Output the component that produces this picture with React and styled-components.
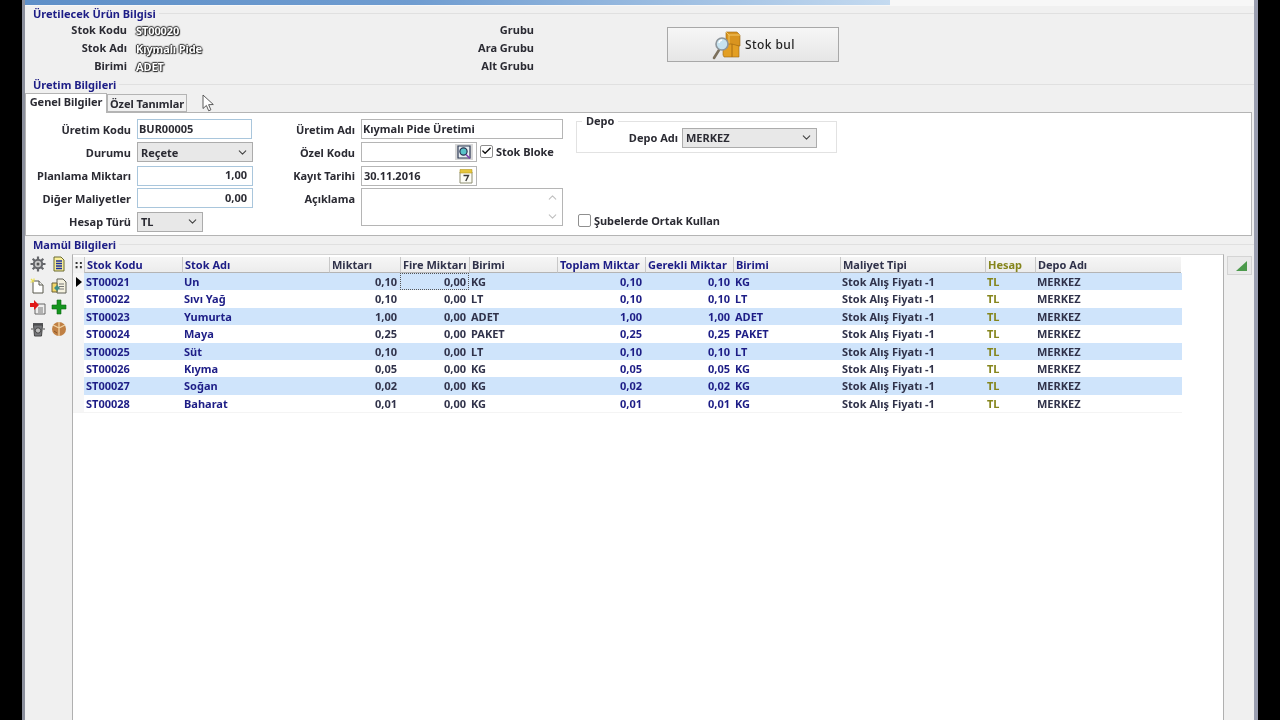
import styled, { createGlobalStyle } from "styled-components";
import { ChevronDown, ChevronUp, Check } from "lucide-react";

const GlobalStyle = createGlobalStyle`
    html, body {
        margin: 0;
        height: 100%;
        background: #000;
        overflow: hidden;
    }
    * {
        box-sizing: border-box;
    }
`;

const NAVY = "#1d1d86";
const DARK = "#30324a";
const OLIVE = "#85851c";

const columns = [
    { key: "code", title: "Stok Kodu", width: 98, color: NAVY },
    { key: "name", title: "Stok Adı", width: 147, color: NAVY },
    { key: "qty", title: "Miktarı", width: 71, color: DARK, right: true },
    { key: "fire", title: "Fire Miktarı", width: 69, color: DARK, right: true },
    { key: "unit", title: "Birimi", width: 88, color: DARK },
    { key: "total", title: "Toplam Miktar", width: 88, color: NAVY, right: true },
    { key: "need", title: "Gerekli Miktar", width: 88, color: NAVY, right: true },
    { key: "unit2", title: "Birimi", width: 107, color: NAVY },
    { key: "cost", title: "Maliyet Tipi", width: 145, color: DARK },
    { key: "acc", title: "Hesap", width: 50, color: OLIVE },
    { key: "depot", title: "Depo Adı", width: 146, color: DARK },
];

const items = [
    ["ST00021", "Un", "0,10", "KG"],
    ["ST00022", "Sıvı Yağ", "0,10", "LT"],
    ["ST00023", "Yumurta", "1,00", "ADET"],
    ["ST00024", "Maya", "0,25", "PAKET"],
    ["ST00025", "Süt", "0,10", "LT"],
    ["ST00026", "Kıyma", "0,05", "KG"],
    ["ST00027", "Soğan", "0,02", "KG"],
    ["ST00028", "Baharat", "0,01", "KG"],
];

function GearIcon() {
    return (
        <svg width="16" height="16" viewBox="0 0 16 16">
            <circle cx="8" cy="8" r="5.2" fill="#66676b" />
            <path d="M8 .5v15M.5 8h15M2.7 2.7l10.6 10.6M13.3 2.7 2.7 13.3" stroke="#66676b" strokeWidth="2.2" />
            <circle cx="8" cy="8" r="3.2" fill="#c8c8c8" />
            <circle cx="8" cy="8" r="1.5" fill="#555" />
        </svg>
    );
}

function ListDocIcon() {
    return (
        <svg width="16" height="16" viewBox="0 0 16 16">
            <path d="M3 1h7l3 3v11H3z" fill="#f8ee9a" stroke="#6a6a30" />
            <path d="M5 5h6M5 7.500h6M5 10h6M5 12.500h6" stroke="#1c2f9c" strokeWidth="1.5" />
        </svg>
    );
}

function NewDocIcon() {
    return (
        <svg width="16" height="16" viewBox="0 0 16 16">
            <path d="M3 3h6l4 4v8H3z" fill="#fff" stroke="#59594c" />
            <path d="M9 3v4h4" fill="#eee" stroke="#59594c" />
            <path d="M1 1l3 3M4 .5v2M.5 4h2" stroke="#ece04a" strokeWidth="1.2" />
        </svg>
    );
}

function EditDocIcon() {
    return (
        <svg width="16" height="16" viewBox="0 0 16 16">
            <path d="M6 1h6l3 3v11H6z" fill="#f4f1df" stroke="#5f5f55" />
            <path d="M8 6h5M8 8.500h5M8 11h5" stroke="#777" />
            <path d="M1 5h5v9H1z" fill="#f3d66a" stroke="#6a6337" />
            <path d="M3 10l3-3 3 3-3 3z" fill="#3f8f88" />
        </svg>
    );
}

function CutDocIcon() {
    return (
        <svg width="16" height="16" viewBox="0 0 16 16">
            <path d="M5 5h10v10H5z" fill="#eee" stroke="#666" />
            <path d="M8 9h5M8 11h5M8 13h5" stroke="#777" />
            <path d="M0 4h4V1l5 5-5 5V8H0z" fill="#e01818" />
        </svg>
    );
}

function PlusIcon() {
    return (
        <svg width="16" height="16" viewBox="0 0 16 16">
            <path d="M6 1h4v5h5v4h-5v5H6v-5H1V6h5z" fill="#14951e" stroke="#0b6a13" strokeWidth=".6" />
        </svg>
    );
}

function TrashIcon() {
    return (
        <svg width="16" height="16" viewBox="0 0 16 16">
            <path d="M3 2h10v2H3z" fill="#55565a" />
            <path d="M3.500 4h9l-1 11h-7z" fill="#77787c" stroke="#444" />
            <circle cx="8" cy="9.500" r="2.700" fill="#bbb" stroke="#444" />
            <path d="M1 8h2M13 8h2" stroke="#888" strokeWidth="1.4" />
        </svg>
    );
}

function BoxIcon() {
    return (
        <svg width="16" height="16" viewBox="0 0 16 16">
            <circle cx="8" cy="8" r="7" fill="#c08044" />
            <path d="M8 1v6M8 7 2 4M8 7l6-3M8 7v8" stroke="#f1d3a4" strokeWidth="1.3" />
            <path d="M3 10l3 2" stroke="#8a5526" />
        </svg>
    );
}

function StockSearchIcon() {
    return (
        <svg width="30" height="30" viewBox="0 0 30 30">
            <path d="M14 2h11l3 3v11H14z" fill="#d9941f" stroke="#9c6410" strokeWidth=".6" />
            <path d="M14 2l3 3h11M17 5v11" stroke="#f4c866" fill="none" />
            <path d="M11 14h9l7 2v11H12l-1-2z" fill="#e39f24" stroke="#9c6410" strokeWidth=".6" />
            <path d="M20 14v13" stroke="#a86c12" />
            <path d="M7 20 2 28" stroke="#7c705c" strokeWidth="2.600" strokeLinecap="round" />
            <circle cx="10" cy="14" r="6" fill="#c7e3ef" stroke="#8d959b" strokeWidth="1.6" />
            <path d="M7 13a3.500 3.500 0 0 1 3-3" stroke="#fff" fill="none" strokeWidth="1.4" />
        </svg>
    );
}

function CodeSearchIcon() {
    return (
        <svg width="16" height="15" viewBox="0 0 16 15">
            <path d="M2 1h12v12H2z" fill="#e9eef2" stroke="#2d3a55" strokeWidth="1.2" />
            <circle cx="7.500" cy="6.500" r="3.600" fill="#59c3c9" stroke="#253350" strokeWidth="1.2" />
            <path d="M10 9.500l4 4" stroke="#7c3fb0" strokeWidth="1.6" />
        </svg>
    );
}

function CalendarIcon() {
    return (
        <svg width="14" height="16" viewBox="0 0 14 16">
            <path d="M1 4h12v11H1z" fill="#fdfdf6" stroke="#8d8d70" />
            <path d="M1 1.500h12v3.500H1z" fill="#e6c63c" stroke="#b59a25" strokeWidth=".6" />
            <path d="M4.500 7.500h5L6.800 13" fill="none" stroke="#3a3a3a" strokeWidth="1.4" />
        </svg>
    );
}

function ArrowCursor() {
    return (
        <svg width="14" height="18" viewBox="0 0 14 18">
            <path d="M1 1v13.500l3.400-3 2.300 5.300 2.200-1-2.300-5.100 4.700-.2z" fill="#fff" stroke="#4a4a4a" strokeWidth=".9" />
        </svg>
    );
}

function App() {
    return (
        <>
            <GlobalStyle />
            <Window>
                <TitleStrip>
                    <TitleFill />
                </TitleStrip>

                <SectionTitle>Üretilecek Ürün Bilgisi</SectionTitle>
                <InfoArea>
                    <InfoColumn>
                        <InfoRow>
                            <InfoLabel>Stok Kodu</InfoLabel>
                            <InfoValue>ST00020</InfoValue>
                        </InfoRow>
                        <InfoRow>
                            <InfoLabel>Stok Adı</InfoLabel>
                            <InfoValue>Kıymalı Pide</InfoValue>
                        </InfoRow>
                        <InfoRow>
                            <InfoLabel>Birimi</InfoLabel>
                            <InfoValue>ADET</InfoValue>
                        </InfoRow>
                    </InfoColumn>
                    <GroupColumn>
                        <InfoLabel>Grubu</InfoLabel>
                        <InfoLabel>Ara Grubu</InfoLabel>
                        <InfoLabel>Alt Grubu</InfoLabel>
                    </GroupColumn>
                    <FindButton>
                        <StockSearchIcon />
                        Stok bul
                    </FindButton>
                </InfoArea>

                <SectionTitle $top={1}>Üretim Bilgileri</SectionTitle>
                <Tabs>
                    <Tab $active>Genel Bilgiler</Tab>
                    <Tab>Özel Tanımlar</Tab>
                    <CursorMark>
                        <ArrowCursor />
                    </CursorMark>
                </Tabs>
                <TabPanel>
                    <FormColumn $width={227}>
                        <FormRow $label={105}>
                            <FieldLabel>Üretim Kodu</FieldLabel>
                            <TextField $width={115} $accent readOnly value="BUR00005" />
                        </FormRow>
                        <FormRow $label={105} $top={3}>
                            <FieldLabel>Durumu</FieldLabel>
                            <SelectBox $width={116}>
                                Reçete
                                <ChevronDown size={13} strokeWidth={2} />
                            </SelectBox>
                        </FormRow>
                        <FormRow $label={105} $top={4}>
                            <FieldLabel $top={-2}>Planlama Miktarı</FieldLabel>
                            <TextField $width={116} $accent $right $lift readOnly value="1,00" />
                        </FormRow>
                        <FormRow $label={105} $top={2}>
                            <FieldLabel>Diğer Maliyetler</FieldLabel>
                            <TextField $width={116} $accent $right readOnly value="0,00" />
                        </FormRow>
                        <FormRow $label={105} $top={4}>
                            <FieldLabel $top={-2}>Hesap Türü</FieldLabel>
                            <SelectBox $width={66} $lift>
                                TL
                                <ChevronDown size={13} strokeWidth={2} />
                            </SelectBox>
                        </FormRow>
                    </FormColumn>

                    <FormColumn $width={323}>
                        <FormRow $label={102}>
                            <FieldLabel>Üretim Adı</FieldLabel>
                            <TextField $width={202} readOnly value="Kıymalı Pide Üretimi" />
                        </FormRow>
                        <FormRow $label={102} $top={3}>
                            <FieldLabel>Özel Kodu</FieldLabel>
                            <FieldBox $width={116}>
                                <LookupButton>
                                    <CodeSearchIcon />
                                </LookupButton>
                            </FieldBox>
                            <CheckRow>
                                <CheckBox $checked>
                                    <Check size={12} strokeWidth={3} />
                                </CheckBox>
                                Stok Bloke
                            </CheckRow>
                        </FormRow>
                        <FormRow $label={102} $top={4}>
                            <FieldLabel $top={-2}>Kayıt Tarihi</FieldLabel>
                            <FieldBox $width={116} $text>
                                <DateText>30.11.2016</DateText>
                                <CalendarIcon />
                            </FieldBox>
                        </FormRow>
                        <FormRow $label={102} $top={2} $tall>
                            <FieldLabel $top={3}>Açıklama</FieldLabel>
                            <MemoBox>
                                <ChevronUp size={13} strokeWidth={2} />
                                <ChevronDown size={13} strokeWidth={2} />
                            </MemoBox>
                        </FormRow>
                    </FormColumn>

                    <DepotColumn>
                        <DepotGroup>
                            <DepotLegend>Depo</DepotLegend>
                            <FormRow $label={101}>
                                <FieldLabel $top={-2} $gap={4}>Depo Adı</FieldLabel>
                                <SelectBox $width={135} $lift>
                                    MERKEZ
                                    <ChevronDown size={13} strokeWidth={2} />
                                </SelectBox>
                            </FormRow>
                        </DepotGroup>
                        <CheckRow $plain>
                            <CheckBox />
                            Şubelerde Ortak Kullan
                        </CheckRow>
                    </DepotColumn>
                </TabPanel>

                <SectionTitle $top={1}>Mamül Bilgileri</SectionTitle>
                <GridArea>
                    <SideTools>
                        <GearIcon />
                        <ListDocIcon />
                        <NewDocIcon />
                        <EditDocIcon />
                        <CutDocIcon />
                        <PlusIcon />
                        <TrashIcon />
                        <BoxIcon />
                    </SideTools>
                    <GridPanel>
                        <HeaderRow>
                            <IndicatorHead>∷</IndicatorHead>
                            {columns.map((col) => (
                                <HeaderCell key={col.key} $width={col.width} $color={col.color}>
                                    {col.title}
                                </HeaderCell>
                            ))}
                        </HeaderRow>
                        {items.map((item, i) => {
                            const values = {
                                code: item[0],
                                name: item[1],
                                qty: item[2],
                                fire: "0,00",
                                unit: item[3],
                                total: item[2],
                                need: item[2],
                                unit2: item[3],
                                cost: "Stok Alış Fiyatı -1",
                                acc: "TL",
                                depot: "MERKEZ",
                            };
                            return (
                                <DataRow key={item[0]} $odd={i % 2 === 0}>
                                    <IndicatorCell>{i === 0 && <RowPointer />}</IndicatorCell>
                                    {columns.map((col) => (
                                        <DataCell
                                            key={col.key}
                                            $width={col.width}
                                            $color={col.color}
                                            $right={col.right}
                                            $focus={i === 0 && col.key === "fire"}
                                        >
                                            {values[col.key]}
                                        </DataCell>
                                    ))}
                                </DataRow>
                            );
                        })}
                    </GridPanel>
                    <RightRail>
                        <CornerButton>
                            <CornerMark />
                        </CornerButton>
                    </RightRail>
                </GridArea>
            </Window>
        </>
    );
}

export default App;

const Window = styled.div`
    display: flex;
    flex-direction: column;
    width: 1236px;
    height: 720px;
    margin-left: 22px;
    overflow: hidden;
    background-color: #f0f0f0;
    border-left: 3px solid #8b8f9c;
    border-right: 4px solid #9a9eb0;
    font-family: "Noto Sans", "DejaVu Sans", sans-serif;
    font-size: 11px;
    font-weight: 700;
    color: #2b2b33;
    filter: blur(0.35px);
`;

const TitleStrip = styled.div`
    flex: none;
    height: 6px;
    background-color: #f7f7f7;
`;

const TitleFill = styled.div`
    width: 865px;
    height: 5px;
    background: linear-gradient(90deg, #5f90c8 0%, #6f9cd0 45%, #c4daf0 100%);
`;

const SectionTitle = styled.div`
    flex: none;
    display: flex;
    align-items: center;
    gap: 3px;
    height: 14px;
    margin-top: ${(p) => p.$top || 0}px;
    padding-left: 8px;
    color: ${NAVY};

    &::after {
        content: "";
        flex: 1;
        height: 1px;
        background-color: #e0e0e0;
    }
`;

const InfoArea = styled.div`
    flex: none;
    display: flex;
    height: 56px;
    padding-top: 1px;
`;

const InfoColumn = styled.div`
    display: flex;
    flex-direction: column;
    width: 300px;
`;

const InfoRow = styled.div`
    display: grid;
    grid-template-columns: 102px auto;
    column-gap: 9px;
    align-items: center;
    height: 18px;
`;

const InfoLabel = styled.div`
    height: 18px;
    line-height: 18px;
    text-align: right;
`;

const InfoValue = styled.div`
    color: #fff;
    font-weight: 700;
    letter-spacing: -0.1px;
    text-shadow: 0 0 2px #222, 1px 1px 1px #222, -1px 0 1px #333, 0 -1px 1px #444;
`;

const GroupColumn = styled.div`
    display: flex;
    flex-direction: column;
    width: 209px;
`;

const FindButton = styled.div`
    display: flex;
    align-items: center;
    justify-content: center;
    gap: 3px;
    width: 172px;
    height: 35px;
    margin: 6px 0 0 133px;
    padding-left: 1px;
    border: 1px solid #a8a8a8;
    background: linear-gradient(#f6f6f6, #e6e6e6);
    font-size: 12px;
    font-weight: 500;
    letter-spacing: 0.4px;
    color: #222;
`;

const Tabs = styled.div`
    position: relative;
    flex: none;
    display: flex;
    align-items: flex-end;
    height: 19px;
    margin-top: 2px;
    z-index: 1;
`;

const Tab = styled.div`
    display: flex;
    align-items: center;
    justify-content: center;
    height: ${(p) => (p.$active ? "20px" : "18px")};
    width: ${(p) => (p.$active ? "82px" : "80px")};
    margin-bottom: ${(p) => (p.$active ? "-1px" : "0")};
    padding-bottom: ${(p) => (p.$active ? "4px" : "0")};
    border: 1px solid #b4b4b4;
    border-bottom: ${(p) => (p.$active ? "none" : "1px solid #b4b4b4")};
    background-color: ${(p) => (p.$active ? "#fff" : "#f0f0f0")};
    letter-spacing: -0.05px;
`;

const CursorMark = styled.div`
    position: absolute;
    left: 177px;
    top: 1px;
`;

const TabPanel = styled.div`
    flex: none;
    display: flex;
    width: 1227px;
    height: 124px;
    padding-top: 6px;
    background-color: #fff;
    border: 1px solid #b4b4b4;
`;

const FormColumn = styled.div`
    flex: none;
    display: flex;
    flex-direction: column;
    width: ${(p) => p.$width}px;
`;

const FormRow = styled.div`
    display: flex;
    align-items: ${(p) => (p.$tall ? "flex-start" : "center")};
    margin-top: ${(p) => p.$top || 0}px;
    min-height: 20px;
    --label: ${(p) => p.$label}px;
`;

const FieldLabel = styled.label`
    flex: none;
    width: var(--label);
    margin-right: ${(p) => p.$gap ?? 6}px;
    margin-top: ${(p) => p.$top || 0}px;
    text-align: right;
`;

const TextField = styled.input`
    width: ${(p) => p.$width}px;
    height: 20px;
    padding: 0 5px ${(p) => (p.$lift ? "4px" : "2px")} 1px;
    border: 1px solid ${(p) => (p.$accent ? "#a9c6dc" : "#b5b5b5")};
    outline: none;
    background-color: #fff;
    text-align: ${(p) => (p.$right ? "right" : "left")};
    font: inherit;
    color: #2b2b33;
`;

const FieldBox = styled.div`
    display: flex;
    align-items: center;
    justify-content: ${(p) => (p.$text ? "space-between" : "flex-end")};
    width: ${(p) => p.$width}px;
    height: 20px;
    padding: 0 3px 0 2px;
    border: 1px solid #b5b5b5;
    background-color: #fff;
`;

const DateText = styled.span`
    margin-top: -2px;
`;

const LookupButton = styled.div`
    display: flex;
    align-items: center;
    justify-content: center;
    width: 18px;
    height: 16px;
    background-color: #d8d8d8;
`;

const SelectBox = styled.div`
    display: flex;
    align-items: center;
    justify-content: space-between;
    width: ${(p) => p.$width}px;
    height: 20px;
    padding: 0 3px ${(p) => (p.$lift ? "2px" : "0")} 3px;
    border: 1px solid #acacac;
    background-color: #e8e8e8;

    svg {
        color: #444;
    }
`;

const MemoBox = styled.div`
    display: flex;
    flex-direction: column;
    align-items: flex-end;
    justify-content: space-between;
    width: 202px;
    height: 38px;
    padding: 2px 3px;
    border: 1px solid #b5b5b5;
    background-color: #fff;

    svg {
        color: #c0c0c0;
    }
`;

const CheckRow = styled.div`
    display: flex;
    align-items: center;
    gap: 3px;
    margin-left: ${(p) => (p.$plain ? "2px" : "3px")};
    margin-top: ${(p) => (p.$plain ? "60px" : "-2px")};
    letter-spacing: -0.05px;
`;

const CheckBox = styled.div`
    display: flex;
    align-items: center;
    justify-content: center;
    width: 13px;
    height: 13px;
    border: 1px solid #8f8f8f;
    border-radius: 2px;
    background-color: #fff;
    color: #111;
`;

const DepotColumn = styled.div`
    display: flex;
    flex-direction: column;
`;

const DepotGroup = styled.div`
    position: relative;
    width: 261px;
    height: 32px;
    margin-top: 2px;
    padding-top: 6px;
    border: 1px solid #e2e2e2;
`;

const DepotLegend = styled.div`
    position: absolute;
    left: 5px;
    top: -8px;
    padding: 0 4px;
    background-color: #fff;
    line-height: 14px;
`;

const GridArea = styled.div`
    flex: 1;
    display: flex;
    margin-top: 3px;
`;

const SideTools = styled.div`
    flex: none;
    display: grid;
    grid-template-columns: 16px 16px;
    grid-auto-rows: 16px;
    column-gap: 5px;
    row-gap: 5.5px;
    align-content: start;
    width: 47px;
    padding: 2px 0 0 5px;
`;

const GridPanel = styled.div`
    flex: none;
    width: 1152px;
    padding-top: 2px;
    background-color: #fff;
    border-left: 1px solid #b0b0b0;
    border-right: 1px solid #b0b0b0;
    border-top: 1px solid #d4d4d4;
`;

const HeaderRow = styled.div`
    display: flex;
    height: 16px;
`;

const IndicatorHead = styled.div`
    flex: none;
    width: 11px;
    line-height: 15px;
    text-align: center;
    background-color: #f2f2f2;
    color: #333;
`;

const HeaderCell = styled.div`
    flex: none;
    width: ${(p) => p.$width}px;
    padding-left: 2px;
    line-height: 15px;
    white-space: nowrap;
    overflow: hidden;
    background: linear-gradient(#f6f6f6, #ececec);
    border-left: 1px solid #c8c8c8;
    border-bottom: 1px solid #b4b4b4;
    color: ${(p) => p.$color};
`;

const DataRow = styled.div`
    display: flex;
    height: 17.4px;
    width: 1109px;
    background-color: ${(p) => (p.$odd ? "#cfe4fb" : "#fff")};
    box-shadow: 0 1px 0 #f4f4f4;
`;

const IndicatorCell = styled.div`
    flex: none;
    display: flex;
    align-items: center;
    justify-content: center;
    width: 11px;
    background-color: #f6f6f6;
`;

const RowPointer = styled.div`
    width: 0;
    height: 0;
    border-top: 5px solid transparent;
    border-bottom: 5px solid transparent;
    border-left: 6px solid #000;
`;

const DataCell = styled.div`
    flex: none;
    width: ${(p) => p.$width}px;
    padding: 0 3px 0 2px;
    line-height: 17px;
    white-space: nowrap;
    text-align: ${(p) => (p.$right ? "right" : "left")};
    color: ${(p) => p.$color};
    outline: ${(p) => (p.$focus ? "1px dotted #555" : "none")};
    outline-offset: -1px;
`;

const RightRail = styled.div`
    flex: 1;
    padding: 2px 0 0 3px;
`;

const CornerButton = styled.div`
    position: relative;
    width: 25px;
    height: 19px;
    border: 1px solid #d4d4d4;
    background-color: #eaeaea;
`;

const CornerMark = styled.div`
    position: absolute;
    right: 4px;
    bottom: 3px;
    width: 0;
    height: 0;
    border-left: 11px solid transparent;
    border-bottom: 10px solid #4c9a4c;
`;
